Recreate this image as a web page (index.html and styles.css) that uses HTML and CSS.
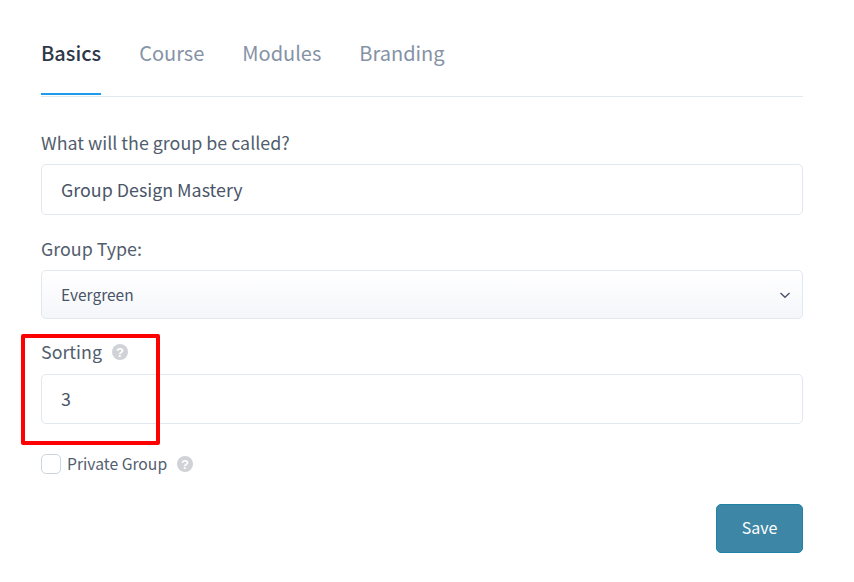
FILE: index.html
```html
<!DOCTYPE html>
<html lang="en">
<head>
<meta charset="utf-8">
<title>Group settings</title>
<link rel="stylesheet" href="styles.css">
</head>
<body>
<main class="page">
  <nav class="tabs">
    <a class="tab active">Basics</a>
    <a class="tab">Course</a>
    <a class="tab">Modules</a>
    <a class="tab">Branding</a>
  </nav>
  <form class="form">
    <div class="field name-field">
      <label class="label">What will the group be called?</label>
      <div class="input tall">Group Design Mastery</div>
    </div>
    <div class="field type-field">
      <label class="label">Group Type:</label>
      <div class="select">
        <span>Evergreen</span>
        <svg class="chevron" width="12" height="8" viewBox="0 0 12 8"><path d="M1.5 2 6 6.2 10.5 2" fill="none" stroke="#4a5568" stroke-width="1.4"/></svg>
      </div>
    </div>
    <div class="field sort-field">
      <label class="label">Sorting
        <svg class="help label-help" width="16" height="16" viewBox="0 0 16 16"><circle cx="8" cy="8" r="8" fill="#cfd2d6"/><text x="8" y="12.5" class="help-mark">?</text></svg>
      </label>
      <div class="input">3</div>
    </div>
    <div class="check-row">
      <span class="checkbox"></span>
      <span class="check-label">Private Group</span>
      <svg class="help" width="16" height="16" viewBox="0 0 16 16"><circle cx="8" cy="8" r="8" fill="#cfd2d6"/><text x="8" y="12.5" class="help-mark">?</text></svg>
    </div>
    <div class="actions"><button class="save" type="button">Save</button></div>
  </form>
  <div class="highlight"></div>
</main>
</body>
</html>
```
FILE: styles.css
```css
* { box-sizing: border-box; }
html, body { margin: 0; background: #fff; }
body {
  font-family: "Noto Sans CJK SC", "Noto Sans", sans-serif;
  color: #4a5568;
}
.page {
  position: relative;
  width: 854px;
  height: 582px;
  padding: 0 51px 0 41px;
}
.tabs {
  display: flex;
  gap: 38px;
  height: 97px;
  padding-top: 37px;
  border-bottom: 1px solid #e2e8f0;
}
.tab {
  display: block;
  height: 58px;
  font-size: 20px;
  line-height: 32px;
  color: #8592a6;
}
.tab.active {
  color: #2d3748;
  font-weight: 500;
  border-bottom: 2px solid #1e9bea;
}
.label {
  display: flex;
  align-items: center;
  gap: 10px;
  height: 26px;
  padding-bottom: 2px;
  font-size: 17.85px;
  line-height: 24px;
  color: #525d6e;
}
.label-help { margin-top: 2px; }
.field { display: block; }
.name-field { margin-top: 33px; }
.type-field { margin-top: 21px; }
.sort-field { margin-top: 20px; }
.input, .select {
  display: flex;
  align-items: center;
  width: 100%;
  border: 1px solid #e2e8f0;
  border-radius: 5px;
  background: #fff;
  padding-left: 19px;
  color: #4a5568;
}
.input {
  height: 50px;
  margin-top: 9px;
  padding-bottom: 2px;
  font-size: 17.85px;
}
.input.tall { height: 51px; margin-top: 8px; }
.select {
  justify-content: space-between;
  height: 49px;
  margin-top: 8px;
  padding-right: 11px;
  font-size: 15.5px;
  background: linear-gradient(#ffffff, #f5f6fa);
}
.select span { margin-bottom: 2px; }
.check-row {
  display: flex;
  align-items: center;
  height: 20px;
  margin-top: 30px;
}
.checkbox {
  width: 20px;
  height: 20px;
  border: 1px solid #cbd5e0;
  border-radius: 5px;
  background: #fff;
}
.check-label {
  margin: 0 10px 0 6px;
  font-size: 15.7px;
  line-height: 20px;
  color: #525d6e;
}
.help { flex: none; }
.help-mark {
  font-family: "Liberation Sans", sans-serif;
  font-size: 13px;
  font-weight: 700;
  fill: #fff;
  text-anchor: middle;
}
.actions {
  display: flex;
  justify-content: flex-end;
  margin-top: 30px;
}
.save {
  width: 87px;
  height: 49px;
  border: 1px solid #1d84a5;
  border-radius: 5px;
  background: #3e86a6;
  color: #fff;
  font-family: inherit;
  font-size: 16px;
  font-weight: 400;
  padding: 0 0 3px;
}
.highlight {
  position: absolute;
  left: 21px;
  top: 334px;
  width: 139px;
  height: 111px;
  border: 4px solid #fe0000;
  border-radius: 2px;
  pointer-events: none;
}
```
